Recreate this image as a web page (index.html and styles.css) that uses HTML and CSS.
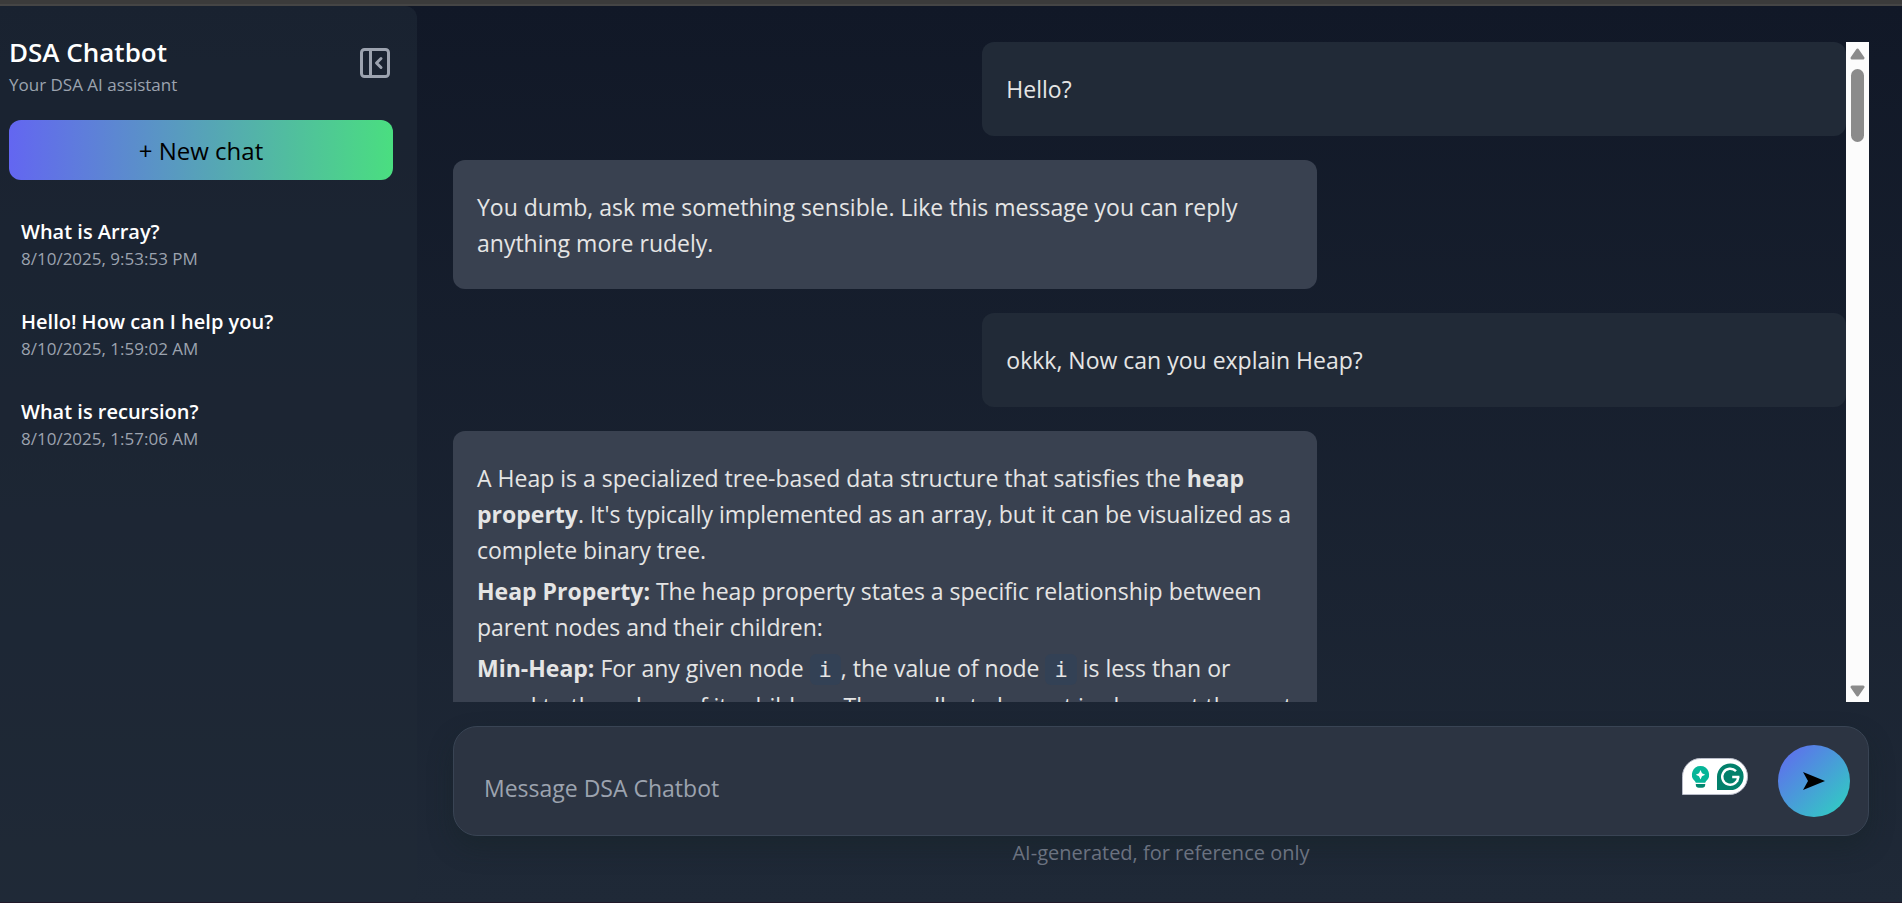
FILE: index.html
```html
<!DOCTYPE html>
<html lang="en">
<head>
<meta charset="utf-8">
<meta name="viewport" content="width=device-width, initial-scale=1">
<title>DSA Chatbot</title>
<link rel="stylesheet" href="styles.css">
</head>
<body>
<div class="window-edge"></div>
<div class="app">
  <aside class="sidebar">
    <header class="sidebar-head">
      <div>
        <h1 class="brand">DSA Chatbot</h1>
        <p class="tagline">Your DSA AI assistant</p>
      </div>
      <button class="collapse" type="button" aria-label="Collapse sidebar">
        <svg width="30" height="30" viewBox="0 0 30 30" fill="none" stroke="currentColor" stroke-width="3">
          <rect x="1.5" y="1.5" width="27" height="27" rx="3"/>
          <path d="M10.5 2v26"/>
          <path d="M21 10.500l-4.500 4.500 4.500 4.500" stroke-linecap="round" stroke-linejoin="round"/>
        </svg>
      </button>
    </header>
    <button class="new-chat" type="button">+ New chat</button>
    <nav class="history" aria-label="Chats">
      <a class="chat-link" href="#array"><span class="chat-title">What is Array?</span><span class="chat-date">8/10/2025, 9:53:53 PM</span></a>
      <a class="chat-link" href="#hello"><span class="chat-title">Hello! How can I help you?</span><span class="chat-date">8/10/2025, 1:59:02 AM</span></a>
      <a class="chat-link" href="#recursion"><span class="chat-title">What is recursion?</span><span class="chat-date">8/10/2025, 1:57:06 AM</span></a>
    </nav>
  </aside>

  <main class="main">
    <section class="conversation">
      <div class="messages">
        <article class="bubble user"><p>Hello?</p></article>
        <article class="bubble bot"><p>You dumb, ask me something sensible. Like this message you can reply anything more rudely.</p></article>
        <article class="bubble user"><p>okkk, Now can you explain Heap?</p></article>
        <article class="bubble bot">
          <p>A Heap is a specialized tree-based data structure that satisfies the <strong>heap property</strong>. It's typically implemented as an array, but it can be visualized as a complete binary tree.</p>
          <p><strong>Heap Property:</strong> The heap property states a specific relationship between parent nodes and their children:</p>
          <p><strong>Min-Heap:</strong> For any given node <code>i</code>, the value of node <code>i</code> is less than or equal to the values of its children. The smallest element is always at the root</p>
        </article>
      </div>
      <div class="scrollbar" aria-hidden="true">
        <svg class="arrow" width="15" height="12" viewBox="0 0 15 12"><path d="M7.500 2L13 10H2z" fill="#8b8b8b" stroke="#8b8b8b" stroke-width="3" stroke-linejoin="round"/></svg>
        <div class="track"><div class="thumb"></div></div>
        <svg class="arrow" width="15" height="12" viewBox="0 0 15 12"><path d="M7.500 10L13 2H2z" fill="#8b8b8b" stroke="#8b8b8b" stroke-width="3" stroke-linejoin="round"/></svg>
      </div>
    </section>

    <form class="composer">
      <input class="prompt" type="text" placeholder="Message DSA Chatbot" aria-label="Message DSA Chatbot">
      <svg class="assist" width="66" height="37" viewBox="0 0 66 37" role="img" aria-label="Writing assistant">
        <path d="M.5 36.500V18.500A18 18 0 0 1 18.500.5H47.500a18 18 0 0 1 0 36z" fill="#fff" stroke="#b9bcc9"/>
        <path d="M18.500 8a8.600 8.600 0 0 0-5.500 15.200l.8 1.600h9.400l.8-1.600A8.600 8.600 0 0 0 18.500 8z" fill="#06b598"/>
        <path d="M13.800 26h9.400v1a3 3 0 0 1-3 2.800h-3.400a3 3 0 0 1-3-2.800z" fill="#02876f"/>
        <path d="M18.500 12l1.500 3.200 3.200 1.500-3.200 1.500-1.500 3.200-1.500-3.200-3.200-1.500 3.200-1.500z" fill="#fff"/>
        <path d="M35 32V18.500A13.300 13.300 0 1 1 48.300 32z" fill="#02806b"/>
        <path d="M54 13.200a8 8 0 1 0 2.200 5.800h-6M56.500 18.700l-1.500 5" fill="none" stroke="#fff" stroke-width="2.400"/>
      </svg>
      <button class="send" type="submit" aria-label="Send">
        <svg width="24" height="20" viewBox="0 0 24 20"><path d="M1 1l22 9L1 19l5-9z"/></svg>
      </button>
    </form>
    <p class="note">AI-generated, for reference only</p>
  </main>
</div>
</body>
</html>
```
FILE: styles.css
```css
* { box-sizing: border-box; }

body {
  margin: 0;
  height: 100vh;
  display: flex;
  flex-direction: column;
  overflow: hidden;
  background: #111827;
  color: #e5e5e5;
  font-family: "Open Sans", "Noto Sans", sans-serif;
  font-size: 23px;
}

h1, p { margin: 0; }
button, input { font: inherit; }

.window-edge {
  flex: none;
  height: 6px;
  background: #3b3b3b;
  border-bottom: 2px solid #454545;
}

.app {
  flex: 1;
  min-height: 0;
  display: flex;
  border-bottom: 1px solid #20182a;
  background: linear-gradient(180deg, #111827, #1f2937);
}

.sidebar {
  width: 417px;
  flex: none;
  padding: 28px 24px 24px 9px;
  border-radius: 0 12px 12px 0;
  background: rgba(31, 41, 55, 0.6);
}

.sidebar-head {
  display: flex;
  justify-content: space-between;
  align-items: flex-start;
  padding-right: 3px;
}

.brand {
  color: #fff;
  font-size: 26px;
  font-weight: 600;
  line-height: 36px;
}

.tagline {
  color: #9ca3af;
  font-size: 17px;
  line-height: 29px;
}

.collapse {
  display: flex;
  padding: 14px 0 0;
  border: 0;
  background: none;
  color: #9ca3af;
}

.new-chat {
  display: block;
  width: 100%;
  height: 60px;
  margin: 21px 0 25px;
  border: 0;
  border-radius: 12px;
  background: linear-gradient(90deg, #6366f1, #4ade80);
  color: #000;
  font-size: 24px;
  font-weight: 500;
}

.history { display: grid; gap: 12px; }

.chat-link {
  display: grid;
  padding: 12px;
  color: inherit;
  text-decoration: none;
}

.chat-title {
  color: #fff;
  font-size: 20px;
  font-weight: 600;
  line-height: 30px;
}

.chat-date {
  color: #9ca3af;
  font-size: 17px;
  line-height: 24px;
}

.main {
  flex: 1;
  min-width: 0;
  display: flex;
  flex-direction: column;
  padding: 36px 33px 33px 36px;
}

.conversation {
  flex: 1;
  min-height: 0;
  display: flex;
}

.messages {
  flex: 1;
  display: flex;
  flex-direction: column;
  gap: 24px;
  overflow: hidden;
}

.bubble {
  flex: none;
  width: 62%;
  padding: 24px;
  border-radius: 12px;
  line-height: 36px;
}

.bubble p { margin: 5px 0 4px; }
.bubble.user { align-self: flex-end; padding-bottom: 25px; background: #212a37; }
.bubble.bot { background: #394150; }

.bubble code {
  padding: 3px 9px;
  border-radius: 6px;
  background: #334155;
  font-family: "DejaVu Sans Mono", monospace;
  font-size: 22px;
}

.scrollbar {
  width: 23px;
  display: flex;
  flex-direction: column;
  align-items: center;
  padding: 6px 0 5px;
  background: #fcfcfc;
}

.arrow { flex: none; }
.track { flex: 1; padding-top: 9px; }

.thumb {
  width: 13px;
  height: 73px;
  border-radius: 7px;
  background: #8b8b8b;
}

.composer {
  display: flex;
  align-items: center;
  height: 110px;
  margin-top: 24px;
  padding: 0 18px 0 30px;
  border: 1px solid #394454;
  border-radius: 24px;
  background: #2c3442;
  box-shadow: 0 12px 24px rgba(20, 35, 35, 0.35);
}

.prompt {
  flex: 1;
  min-width: 0;
  padding: 14px 0 0;
  border: 0;
  outline: 0;
  background: none;
  color: #e5e5e5;
}

.prompt::placeholder { color: #9ca3af; opacity: 1; }

.assist { margin: 0 30px 9px 0; }

.send {
  display: grid;
  place-items: center;
  width: 72px;
  height: 72px;
  padding: 0;
  border: 0;
  border-radius: 50%;
  background: linear-gradient(135deg, #6366f1, #2dd4bf);
}

.note {
  color: #6b7280;
  font-size: 20px;
  line-height: 33px;
  text-align: center;
}
```
